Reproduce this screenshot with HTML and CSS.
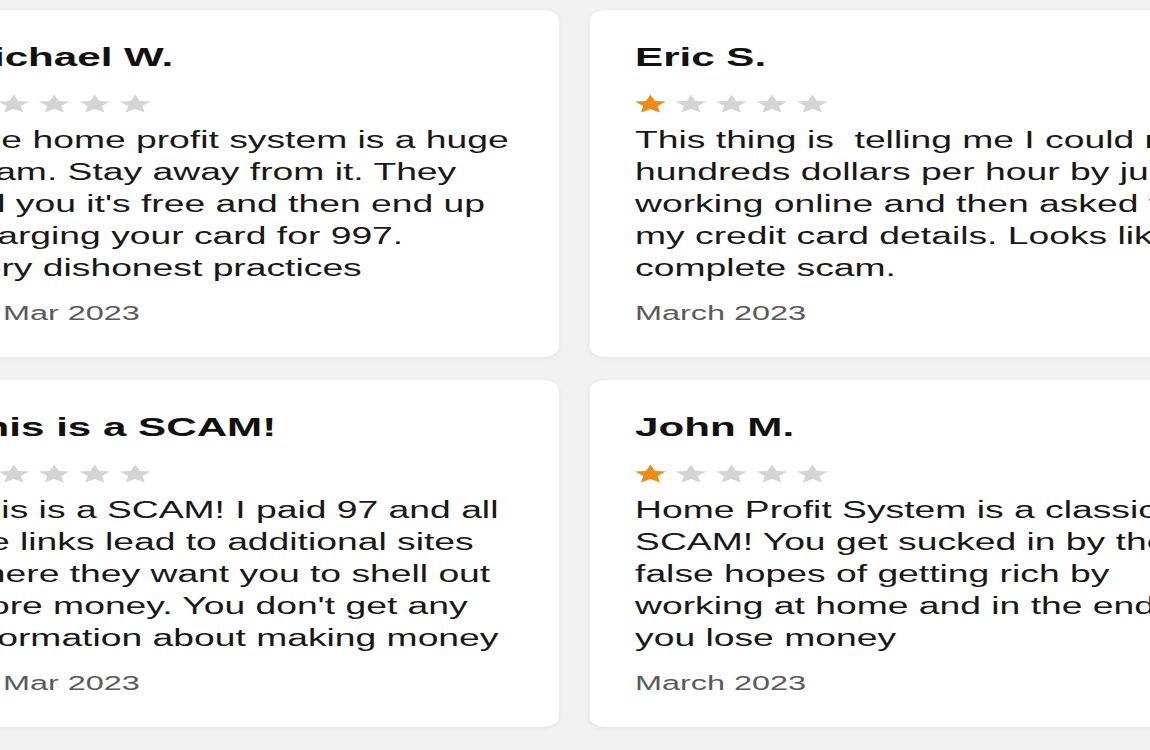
FILE: index.html
```html
<!DOCTYPE html>
<html lang="en">
<head>
    <title>Home Profit System Reviews</title>
    <link rel="stylesheet" href="styles.css">
</head>
<body>
    <div class="stage">
        <div class="reviews">
            <div class="review-card">
                <h3 class="reviewer">Michael W.</h3>
                <div class="stars">
                    <svg class="star on" viewBox="2 2 20 19.2"><path d="M12 2l2.9 6.9 7.1.6-5.4 4.7 1.6 7-6.2-3.7-6.2 3.7 1.6-7L2 9.5l7.1-.6z"/></svg>
                    <svg class="star" viewBox="2 2 20 19.2"><path d="M12 2l2.9 6.9 7.1.6-5.4 4.7 1.6 7-6.2-3.7-6.2 3.7 1.6-7L2 9.5l7.1-.6z"/></svg>
                    <svg class="star" viewBox="2 2 20 19.2"><path d="M12 2l2.9 6.9 7.1.6-5.4 4.7 1.6 7-6.2-3.7-6.2 3.7 1.6-7L2 9.5l7.1-.6z"/></svg>
                    <svg class="star" viewBox="2 2 20 19.2"><path d="M12 2l2.9 6.9 7.1.6-5.4 4.7 1.6 7-6.2-3.7-6.2 3.7 1.6-7L2 9.5l7.1-.6z"/></svg>
                    <svg class="star" viewBox="2 2 20 19.2"><path d="M12 2l2.9 6.9 7.1.6-5.4 4.7 1.6 7-6.2-3.7-6.2 3.7 1.6-7L2 9.5l7.1-.6z"/></svg>
                </div>
                <p class="review-text">The home profit system is a huge<br>scam. Stay away from it. They<br>tell you it's free and then end up<br>charging your card for 997.<br>Very dishonest practices</p>
                <div class="review-date">15 Mar 2023</div>
            </div>

            <div class="review-card">
                <h3 class="reviewer">Eric S.</h3>
                <div class="stars">
                    <svg class="star on" viewBox="2 2 20 19.2"><path d="M12 2l2.9 6.9 7.1.6-5.4 4.7 1.6 7-6.2-3.7-6.2 3.7 1.6-7L2 9.5l7.1-.6z"/></svg>
                    <svg class="star" viewBox="2 2 20 19.2"><path d="M12 2l2.9 6.9 7.1.6-5.4 4.7 1.6 7-6.2-3.7-6.2 3.7 1.6-7L2 9.5l7.1-.6z"/></svg>
                    <svg class="star" viewBox="2 2 20 19.2"><path d="M12 2l2.9 6.9 7.1.6-5.4 4.7 1.6 7-6.2-3.7-6.2 3.7 1.6-7L2 9.5l7.1-.6z"/></svg>
                    <svg class="star" viewBox="2 2 20 19.2"><path d="M12 2l2.9 6.9 7.1.6-5.4 4.7 1.6 7-6.2-3.7-6.2 3.7 1.6-7L2 9.5l7.1-.6z"/></svg>
                    <svg class="star" viewBox="2 2 20 19.2"><path d="M12 2l2.9 6.9 7.1.6-5.4 4.7 1.6 7-6.2-3.7-6.2 3.7 1.6-7L2 9.5l7.1-.6z"/></svg>
                </div>
                <p class="review-text">This thing is&nbsp; telling me I could make<br>hundreds dollars per hour by just<br>working online and then asked for<br>my credit card details. Looks like a<br>complete scam.</p>
                <div class="review-date">March 2023</div>
            </div>

            <div class="review-card">
                <h3 class="reviewer">This is a SCAM!</h3>
                <div class="stars">
                    <svg class="star on" viewBox="2 2 20 19.2"><path d="M12 2l2.9 6.9 7.1.6-5.4 4.7 1.6 7-6.2-3.7-6.2 3.7 1.6-7L2 9.5l7.1-.6z"/></svg>
                    <svg class="star" viewBox="2 2 20 19.2"><path d="M12 2l2.9 6.9 7.1.6-5.4 4.7 1.6 7-6.2-3.7-6.2 3.7 1.6-7L2 9.5l7.1-.6z"/></svg>
                    <svg class="star" viewBox="2 2 20 19.2"><path d="M12 2l2.9 6.9 7.1.6-5.4 4.7 1.6 7-6.2-3.7-6.2 3.7 1.6-7L2 9.5l7.1-.6z"/></svg>
                    <svg class="star" viewBox="2 2 20 19.2"><path d="M12 2l2.9 6.9 7.1.6-5.4 4.7 1.6 7-6.2-3.7-6.2 3.7 1.6-7L2 9.5l7.1-.6z"/></svg>
                    <svg class="star" viewBox="2 2 20 19.2"><path d="M12 2l2.9 6.9 7.1.6-5.4 4.7 1.6 7-6.2-3.7-6.2 3.7 1.6-7L2 9.5l7.1-.6z"/></svg>
                </div>
                <p class="review-text">This is a SCAM! I paid 97 and all<br>the links lead to additional sites<br>where they want you to shell out<br>more money. You don't get any<br>information about making money</p>
                <div class="review-date">12 Mar 2023</div>
            </div>

            <div class="review-card">
                <h3 class="reviewer">John M.</h3>
                <div class="stars">
                    <svg class="star on" viewBox="2 2 20 19.2"><path d="M12 2l2.9 6.9 7.1.6-5.4 4.7 1.6 7-6.2-3.7-6.2 3.7 1.6-7L2 9.5l7.1-.6z"/></svg>
                    <svg class="star" viewBox="2 2 20 19.2"><path d="M12 2l2.9 6.9 7.1.6-5.4 4.7 1.6 7-6.2-3.7-6.2 3.7 1.6-7L2 9.5l7.1-.6z"/></svg>
                    <svg class="star" viewBox="2 2 20 19.2"><path d="M12 2l2.9 6.9 7.1.6-5.4 4.7 1.6 7-6.2-3.7-6.2 3.7 1.6-7L2 9.5l7.1-.6z"/></svg>
                    <svg class="star" viewBox="2 2 20 19.2"><path d="M12 2l2.9 6.9 7.1.6-5.4 4.7 1.6 7-6.2-3.7-6.2 3.7 1.6-7L2 9.5l7.1-.6z"/></svg>
                    <svg class="star" viewBox="2 2 20 19.2"><path d="M12 2l2.9 6.9 7.1.6-5.4 4.7 1.6 7-6.2-3.7-6.2 3.7 1.6-7L2 9.5l7.1-.6z"/></svg>
                </div>
                <p class="review-text">Home Profit System is a classic<br>SCAM! You get sucked in by the<br>false hopes of getting rich by<br>working at home and in the end<br>you lose money</p>
                <div class="review-date">March 2023</div>
            </div>
        </div>
    </div>
</body>
</html>
```

FILE: styles.css
```css
:root {
    --page-bg: #f2f2f2;
    --text-color: #181818;
    --muted: #5a5a5a;
    --star-on: #ec8a12;
    --star-off: #d4d4d4;
}

html,
body {
    margin: 0;
    height: 100%;
    overflow: hidden;
    background-color: var(--page-bg);
}

body {
    font-family: "Liberation Sans", Arial, sans-serif;
    color: var(--text-color);
}

/* the source capture is stretched wide, so the whole grid is too */
.stage {
    transform: scaleX(1.62);
    transform-origin: 0 0;
    padding-top: 10px;
}

.reviews {
    display: grid;
    grid-template-columns: 399px 399px;
    column-gap: 19px;
    row-gap: 23px;
    margin-left: -54px;
}

.review-card {
    box-sizing: border-box;
    height: 347px;
    padding: 32px 28px;
    background-color: #fff;
    border-radius: 10px;
    box-shadow: 0 1px 4px rgba(0, 0, 0, 0.07);
}

.reviewer {
    margin: 0 0 22px;
    font-size: 26px;
    line-height: 30px;
    font-weight: 700;
    color: #111;
}

.stars {
    display: flex;
    gap: 6px;
    height: 19px;
    margin-bottom: 11px;
}

.star {
    width: 19px;
    height: 19px;
    fill: var(--star-off);
}

.star.on {
    fill: var(--star-on);
}

.review-text {
    margin: 0;
    font-size: 23px;
    line-height: 32px;
    white-space: nowrap;
}

.review-date {
    margin-top: 17px;
    font-size: 20px;
    line-height: 24px;
    color: var(--muted);
}
```
